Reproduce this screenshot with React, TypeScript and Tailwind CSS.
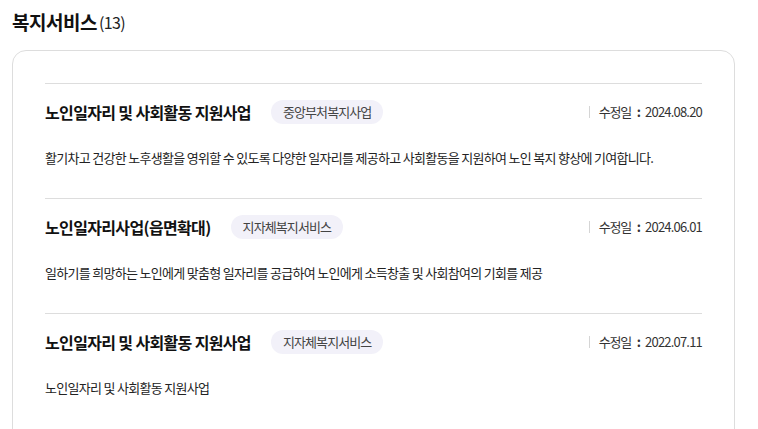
import React from "react";

const items = [
  {
    title: "노인일자리 및 사회활동 지원사업",
    badge: "중앙부처복지사업",
    date: "2024.08.20",
    desc: "활기차고 건강한 노후생활을 영위할 수 있도록 다양한 일자리를 제공하고 사회활동을 지원하여 노인 복지 향상에 기여합니다.",
  },
  {
    title: "노인일자리사업(읍면확대)",
    badge: "지자체복지서비스",
    date: "2024.06.01",
    desc: "일하기를 희망하는 노인에게 맞춤형 일자리를 공급하여 노인에게 소득창출 및 사회참여의 기회를 제공",
  },
  {
    title: "노인일자리 및 사회활동 지원사업",
    badge: "지자체복지서비스",
    date: "2022.07.11",
    desc: "노인일자리 및 사회활동 지원사업",
  },
];

export default function App() {
  return (
    <div
      className="w-[758px] h-[429px] overflow-hidden bg-white pl-3"
      style={{ fontFamily: '"Noto Sans CJK KR", "Noto Sans", sans-serif' }}
    >
      <div className="pt-2 h-9 flex items-center">
        <span className="text-[19px] font-bold text-[#111] tracking-[-0.5px] leading-7">복지서비스</span>
        <span className="text-[16px] text-[#222] tracking-[-0.6px] leading-7 ml-[2px]">(13)</span>
      </div>
      <div className="mt-[14px] w-[723px] h-[500px] border border-[#dddddd] rounded-[14px] px-8 pt-8">
        {items.map((it, i) => (
          <div key={i} className="border-t border-[#dddddd] pt-4 pb-[30px]">
            <div className="h-6 flex items-center">
              <span className="text-[16px] font-bold text-[#111] tracking-[-0.65px] leading-6">{it.title}</span>
              <span className="ml-5 h-6 px-[12px] rounded-full bg-[#f2f1f9] text-[13px] text-[#444] tracking-[-0.9px] flex items-center">
                {it.badge}
              </span>
              <div className="ml-auto flex items-center text-[13px] text-[#333]">
                <span className="w-px h-3 bg-[#d5d5d5] mr-[9px]"></span>
                <span className="tracking-[-1.3px]">수정일</span>
                <span className="ml-[6px] mr-[4px] font-bold">:</span>
                <span className="tracking-[-0.8px]">{it.date}</span>
              </div>
            </div>
            <div className="mt-6 text-[13px] leading-5 text-[#222] tracking-[-0.7px]">{it.desc}</div>
          </div>
        ))}
      </div>
    </div>
  );
}
